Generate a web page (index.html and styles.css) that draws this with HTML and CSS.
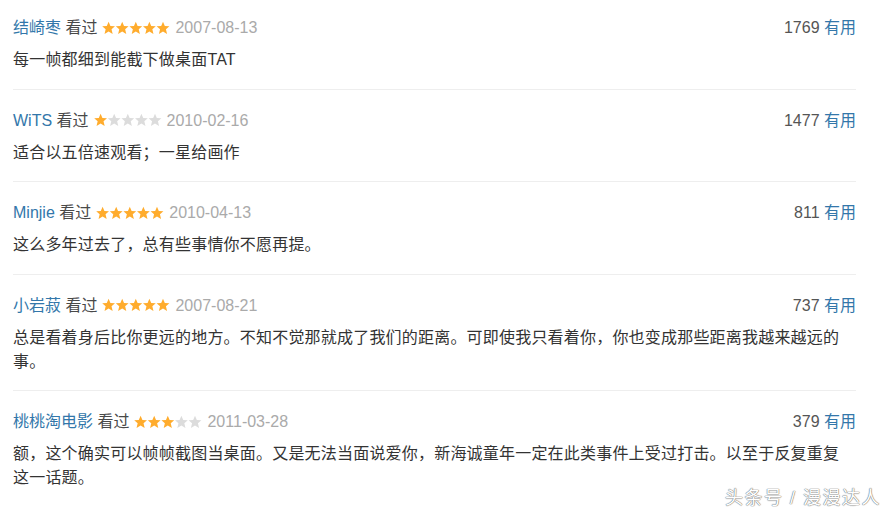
FILE: index.html
```html
<!DOCTYPE html>
<html lang="zh-CN">
<head>
  <meta charset="UTF-8" />
  <title>短评</title>
  <link rel="stylesheet" href="styles.css">
</head>
<body>
  <div class="comments">
    <div class="comment">
      <div class="comment-info">
        <span class="author"><a href="#">结崎枣</a> 看过<span class="stars" data-rating="5"></span><span class="date">2007-08-13</span></span>
        <span class="votes">1769 <a href="#">有用</a></span>
      </div>
      <p class="text">每一帧都细到能截下做桌面TAT</p>
    </div>

    <div class="comment">
      <div class="comment-info">
        <span class="author"><a href="#">WiTS</a> 看过<span class="stars" data-rating="1"></span><span class="date">2010-02-16</span></span>
        <span class="votes">1477 <a href="#">有用</a></span>
      </div>
      <p class="text">适合以五倍速观看；一星给画作</p>
    </div>

    <div class="comment">
      <div class="comment-info">
        <span class="author"><a href="#">Minjie</a> 看过<span class="stars" data-rating="5"></span><span class="date">2010-04-13</span></span>
        <span class="votes">811 <a href="#">有用</a></span>
      </div>
      <p class="text">这么多年过去了，总有些事情你不愿再提。</p>
    </div>

    <div class="comment">
      <div class="comment-info">
        <span class="author"><a href="#">小岩菽</a> 看过<span class="stars" data-rating="5"></span><span class="date">2007-08-21</span></span>
        <span class="votes">737 <a href="#">有用</a></span>
      </div>
      <p class="text">总是看着身后比你更远的地方。不知不觉那就成了我们的距离。可即使我只看着你，你也变成那些距离我越来越远的事。</p>
    </div>

    <div class="comment">
      <div class="comment-info">
        <span class="author"><a href="#">桃桃淘电影</a> 看过<span class="stars" data-rating="3"></span><span class="date">2011-03-28</span></span>
        <span class="votes">379 <a href="#">有用</a></span>
      </div>
      <p class="text">额，这个确实可以帧帧截图当桌面。又是无法当面说爱你，新海诚童年一定在此类事件上受过打击。以至于反复重复这一话题。</p>
    </div>
  </div>

  <div class="watermark">头条号 / 漫漫达人</div>

  <script>
    const starPath = 'M6.5 0.4 L8.3 4.5 L12.8 4.8 L9.4 7.7 L10.5 12.4 L6.5 9.9 L2.5 12.4 L3.6 7.7 L0.2 4.8 L4.7 4.5 Z';
    document.querySelectorAll('.stars').forEach(el => {
      const rating = Number(el.dataset.rating);
      let svg = '<svg width="68" height="14" viewBox="0 0 67 13">';
      for (let i = 0; i < 5; i++) {
        const fill = i < rating ? '#ffac2d' : '#dcdcdc';
        svg += `<path transform="translate(${i * 13.4} 0)" d="${starPath}" fill="${fill}"/>`;
      }
      el.innerHTML = svg + '</svg>';
    });
  </script>
</body>
</html>
```

FILE: styles.css
```css
:root {
  --link-blue: #3377aa;
  --text-color: #494949;
  --muted: #aaaaaa;
  --line: #eeeeee;
}

* {
  margin: 0;
  padding: 0;
  box-sizing: border-box;
}

body {
  font-family: Arial, 'Liberation Sans', 'Noto Sans CJK SC', sans-serif;
  font-size: 16px;
  color: var(--text-color);
  background: #ffffff;
  width: 893px;
  height: 512px;
  overflow: hidden;
  position: relative;
}

a {
  color: var(--link-blue);
  text-decoration: none;
}

.comments {
  width: 843px;
  margin-left: 13px;
}

.comment {
  padding: 18px 0 16.5px;
  border-bottom: 1px solid var(--line);
}

.comment:first-child {
  padding-top: 15px;
}

.comment:last-child {
  border-bottom: none;
}

.comment-info {
  display: flex;
  justify-content: space-between;
  align-items: center;
  height: 24px;
  line-height: 24px;
  margin-top: 1px;
}

.author {
  display: flex;
  align-items: center;
  white-space: pre;
}

.stars {
  display: inline-flex;
  align-items: center;
  height: 24px;
  margin-left: 5px;
}

.stars svg {
  display: block;
  margin-top: -1px;
}

.date {
  color: var(--muted);
  margin-left: 5px;
}

.votes {
  color: #555;
}

.text {
  margin-top: 8px;
  line-height: 24px;
  max-width: 836px;
  letter-spacing: 0.2px;
  color: #333;
}

.watermark {
  position: absolute;
  right: 12px;
  bottom: 6px;
  font-size: 18px;
  line-height: 16px;
  letter-spacing: 1.5px;
  color: #ffffff;
  text-shadow: 0 0 1px #777, 0 0 1px #777, 0 0 1px #999;
}
```
